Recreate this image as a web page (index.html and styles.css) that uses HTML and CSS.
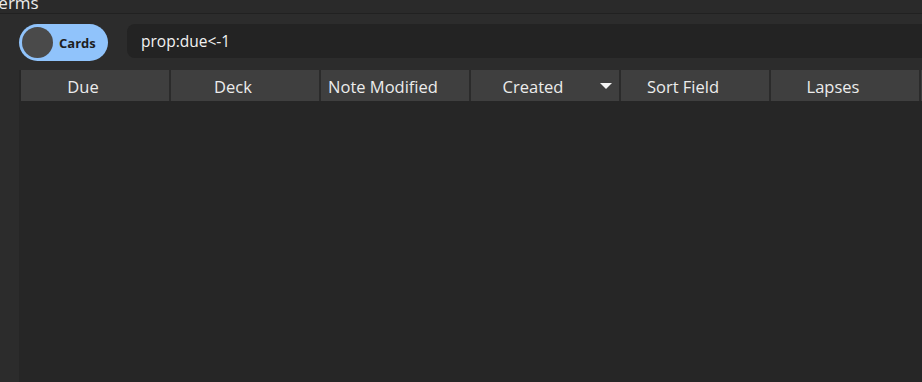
FILE: index.html
```html
<!DOCTYPE html>
<html lang="en">
<head>
    <meta charset="UTF-8">
    <meta name="viewport" content="width=device-width, initial-scale=1.0">
    <title>Browse</title>
    <link rel="stylesheet" href="styles.css">
</head>
<body>
    <div class="titlebar">
        <span class="title">Terms</span>
    </div>

    <div class="main">
        <div class="toolbar">
            <div class="toggle">
                <div class="knob"></div>
                <span class="toggle-label">Cards</span>
            </div>
            <div class="search">prop:due&lt;-1</div>
        </div>

        <div class="table">
            <div class="header">
                <div class="col">Due</div>
                <div class="col">Deck</div>
                <div class="col">Note Modified</div>
                <div class="col sorted">Created<span class="arrow"></span></div>
                <div class="col">Sort Field</div>
                <div class="col">Lapses</div>
                <div class="col rest"></div>
            </div>
            <div class="rows"></div>
        </div>
    </div>
</body>
</html>
```

FILE: styles.css
```css
body {
    margin: 0;
    font-family: "Open Sans", "Noto Sans", sans-serif;
    background: #2c2c2c;
    color: #ececec;
    height: 100vh;
    overflow: hidden;
    display: flex;
    flex-direction: column;
}

.titlebar {
    height: 13px;
    background: #2a2a2a;
    border-bottom: 1px solid #212121;
    overflow: hidden;
    white-space: nowrap;
}

.title {
    display: block;
    font-size: 17px;
    line-height: 16px;
    margin-top: -5px;
    margin-left: -11px;
}

.main {
    flex: 1;
    display: flex;
    flex-direction: column;
    padding: 10px 0 0 19px;
    min-height: 0;
}

.toolbar {
    display: flex;
    align-items: flex-start;
    gap: 19px;
}

.toggle {
    width: 89px;
    height: 37px;
    box-sizing: border-box;
    border-radius: 19px;
    background: #90c3fb;
    display: flex;
    align-items: center;
    padding-left: 3px;
    gap: 6px;
}

.knob {
    width: 31px;
    height: 31px;
    border-radius: 50%;
    background: #4a4a4a;
}

.toggle-label {
    font-size: 13px;
    font-weight: 700;
    color: #1e1e1e;
}

.search {
    flex: 1;
    height: 34px;
    box-sizing: border-box;
    background: #232323;
    border-radius: 8px 0 0 8px;
    padding: 1px 0 0 14px;
    font-size: 15.5px;
    line-height: 33px;
    color: #f2f2f2;
}

.table {
    flex: 1;
    margin-top: 9px;
    background: #262626;
    display: flex;
    flex-direction: column;
}

.header {
    display: flex;
    padding-left: 2px;
    height: 31px;
}

.col {
    flex: none;
    width: 124px;
    background: #3f3f3f;
    border-right: 2px solid #2b2b2b;
    padding: 2px 24px 0 0;
    text-align: center;
    font-size: 16.5px;
    line-height: 29px;
    white-space: nowrap;
    position: relative;
}

.col.rest {
    flex: 1;
    width: auto;
    padding-right: 0;
    border-right: none;
}

.arrow {
    position: absolute;
    left: 129px;
    top: 13px;
    width: 0;
    height: 0;
    border-left: 6px solid transparent;
    border-right: 6px solid transparent;
    border-top: 6px solid #f4f4f4;
}

.rows {
    flex: 1;
}
```
